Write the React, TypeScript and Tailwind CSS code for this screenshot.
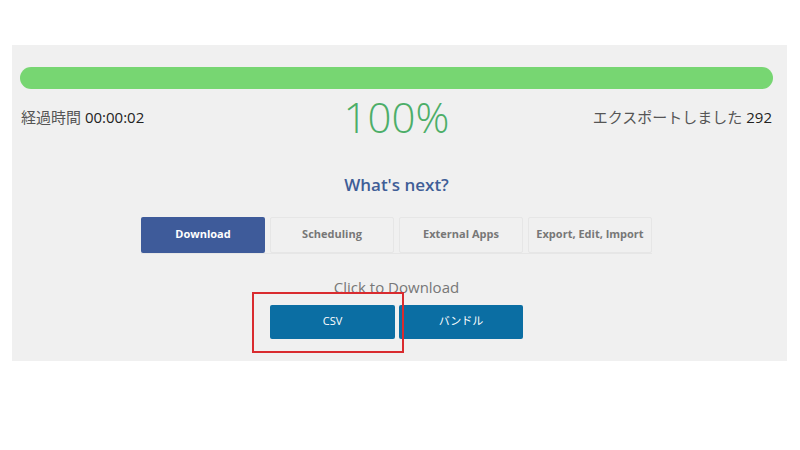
import React from "react";

const font = { fontFamily: '"Open Sans", "Noto Sans CJK JP", sans-serif' };

export default function App() {
  const tabs = ["Download", "Scheduling", "External Apps", "Export, Edit, Import"];
  return (
    <div className="w-[800px] h-[450px] bg-white pt-[45px] pl-[12px]" style={font}>
      <div className="relative w-[775px] h-[316px] bg-[#f0f0f0] pt-[22px] pl-[8px] pr-[14px]">
        <div className="h-[22px] w-full rounded-full bg-[#77d672]" />
        <div className="mt-[6px] grid grid-cols-[1fr_auto_1fr] items-center px-[1px]">
          <div className="text-[15px] text-[#555]">
            経過時間 <span className="text-[#222]">00:00:02</span>
          </div>
          <div className="text-[42px] leading-[44px] text-[#4cae68] font-light">100%</div>
          <div className="text-right text-[15px] text-[#555]">
            エクスポートしました <span className="text-[#222]">292</span>
          </div>
        </div>
        <div className="mt-[33px] text-center text-[17px] font-semibold text-[#3f5e97]">What's next?</div>
        <div className="mt-[19px] flex justify-center">
          <div className="flex gap-[5px] border-b border-[#e6e6e6]">
            {tabs.map((t, i) => (
              <div
                key={t}
                className={
                  i === 0
                    ? "w-[124px] h-[36px] flex items-center justify-center rounded-[2px] bg-[#3e5b9a] text-white text-[11px] font-bold"
                    : "w-[124px] h-[36px] flex items-center justify-center rounded-[2px] border border-[#e6e6e6] text-[#777] text-[11px] font-bold"
                }
              >
                {t}
              </div>
            ))}
          </div>
        </div>
        <div className="mt-[23px] text-center text-[15px] leading-[20px] text-[#777]">Click to Download</div>
        <div className="mt-[8px] flex justify-center gap-[4px]">
          <div className="w-[125px] h-[34px] flex items-center justify-center rounded-[2px] bg-[#0b6ea3] text-white text-[11px]">
            CSV
          </div>
          <div className="w-[124px] h-[34px] flex items-center justify-center rounded-[2px] bg-[#0b6ea3] text-white text-[11px]">
            バンドル
          </div>
        </div>
        <div className="absolute left-[240px] top-[247px] w-[152px] h-[61px] border-2 border-[#d92b2f]" />
      </div>
    </div>
  );
}
